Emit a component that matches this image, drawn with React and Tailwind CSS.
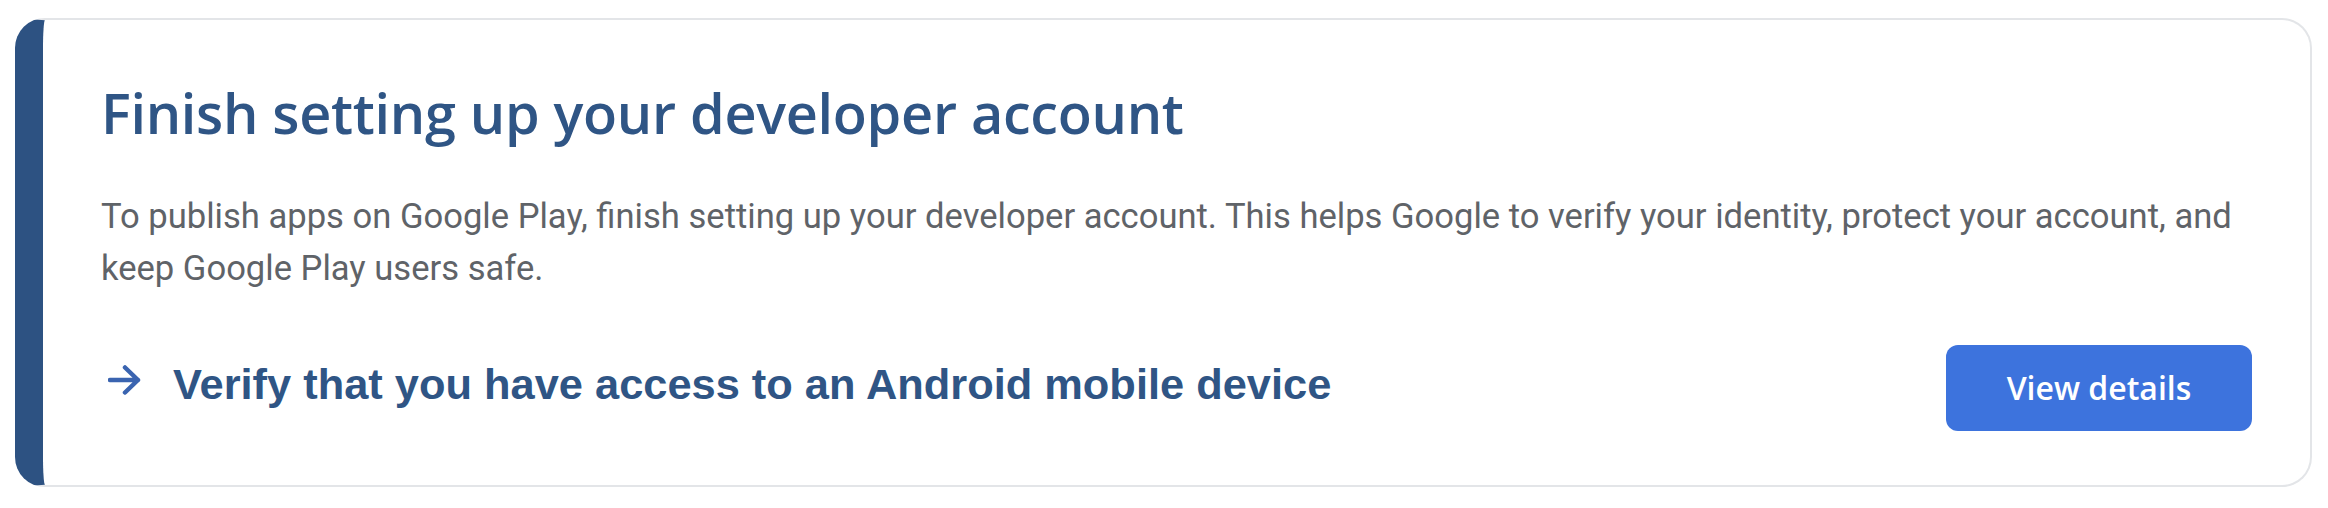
export default function App() {
  return (
    <div className="w-[2328px] h-[508px] bg-white pt-[18px] pl-[15px] pr-[16px]">
      <div className="h-[469px] bg-white rounded-[30px] border-2 border-[#e3e5e8] border-l-[28px] border-l-[#2d5282] pl-[58px] pr-[58px] pt-[60px]">
        <h1 className="text-[55.8px] leading-[64px] font-semibold tracking-[-0.3px] text-[#2f5585] font-['Open_Sans',sans-serif]">
          Finish setting up your developer account
        </h1>
        <p className="mt-[46px] text-[34.6px] leading-[52px] text-[#5f6368] font-['Roboto',sans-serif]">
          To publish apps on Google Play, finish setting up your developer account. This helps Google to verify your identity, protect your account, and keep Google Play users safe.
        </p>
        <div className="mt-[44px] flex items-center justify-between">
          <div className="flex items-center gap-[32px] pl-[7px]">
            <svg width="33" height="30" viewBox="0 0 33 30" className="-mt-[8px]">
              <path d="M2 15H30M17 2.5L30 15L17 27.5" fill="none" stroke="#3a64b0" strokeWidth="4.5" strokeLinecap="round" strokeLinejoin="round" />
            </svg>
            <span className="text-[43.4px] font-bold text-[#2f5585] font-['Liberation_Sans',sans-serif]">
              Verify that you have access to an Android mobile device
            </span>
          </div>
          <button className="mt-[7px] w-[306px] h-[86px] rounded-[12px] bg-[#3d73dd] text-white text-[32px] font-semibold font-['Open_Sans',sans-serif]">
            View details
          </button>
        </div>
      </div>
    </div>
  );
}
